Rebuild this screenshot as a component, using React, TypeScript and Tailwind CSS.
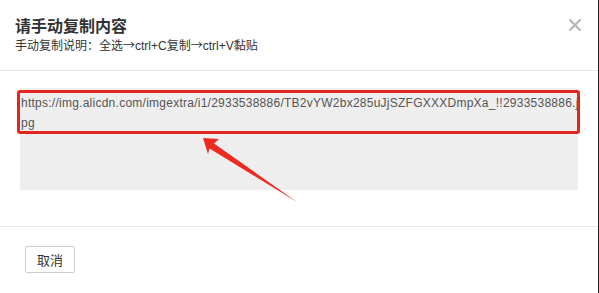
export default function App() {
  const url =
    "https://img.alicdn.com/imgextra/i1/2933538886/TB2vYW2bx285uJjSZFGXXXDmpXa_!!2933538886.jpg";
  const cut = url.length - 2;

  return (
    <div className="flex w-[599px] h-[293px] overflow-hidden bg-white">
      <div className="relative flex-1 flex flex-col">
        {/* header */}
        <div className="relative h-[71px] px-[15px] pt-[15px] border-b border-[#e5e5e5]">
          <h3 className="text-[16px] leading-[20px] font-bold text-[#333] font-['Noto_Sans_CJK_SC',sans-serif]">
            请手动复制内容
          </h3>
          <p className="mt-[2px] text-[12px] leading-[16px] text-[#333] font-['Liberation_Sans','Noto_Sans_CJK_SC',sans-serif]">
            手动复制说明：全选<span className="font-['Noto_Sans_CJK_SC']">→</span>ctrl+C复制
            <span className="font-['Noto_Sans_CJK_SC']">→</span>ctrl+V黏贴
          </p>
          <button className="absolute right-[16px] top-[18px] w-[14px] h-[14px] flex items-center justify-center">
            <svg width="12" height="12" viewBox="0 0 12 12" stroke="#b5b5b5" strokeWidth="2" strokeLinecap="round">
              <path d="M1 1L11 11M11 1L1 11" />
            </svg>
          </button>
        </div>

        {/* body */}
        <div className="px-[20px] pt-[17px] pb-[36px] border-b border-[#e5e5e5]">
          <div className="w-[558px] h-[102px] overflow-hidden bg-[#eeeeee] pt-[5px] pl-[1px] text-[12px] leading-[20px] tracking-[0.25px] text-[#555] whitespace-nowrap font-['Liberation_Sans',sans-serif]">
            {url.slice(0, cut)}
            <br />
            {url.slice(cut)}
          </div>
        </div>

        {/* footer */}
        <div className="pt-[19px] pl-[25px]">
          <button className="w-[50px] h-[27px] border border-[#cccccc] rounded-[2px] bg-white text-[13px] text-[#333] font-['Noto_Sans_CJK_SC',sans-serif]">
            取消
          </button>
        </div>

        {/* annotation: red box + arrow */}
        <div className="absolute left-[17px] top-[90px] w-[563px] h-[44px] border-[3px] border-[#e3261d] rounded-[3px] pointer-events-none" />
        <svg
          className="absolute left-0 top-0 pointer-events-none"
          width="597"
          height="293"
          viewBox="0 0 597 293"
        >
          <polygon
            points="203,138 219,139 214,143.5 297,202 209.5,148.5 208,154"
            fill="#ec2a1f"
          />
        </svg>
      </div>
      <div className="w-[2px] bg-[#222]" />
    </div>
  );
}
